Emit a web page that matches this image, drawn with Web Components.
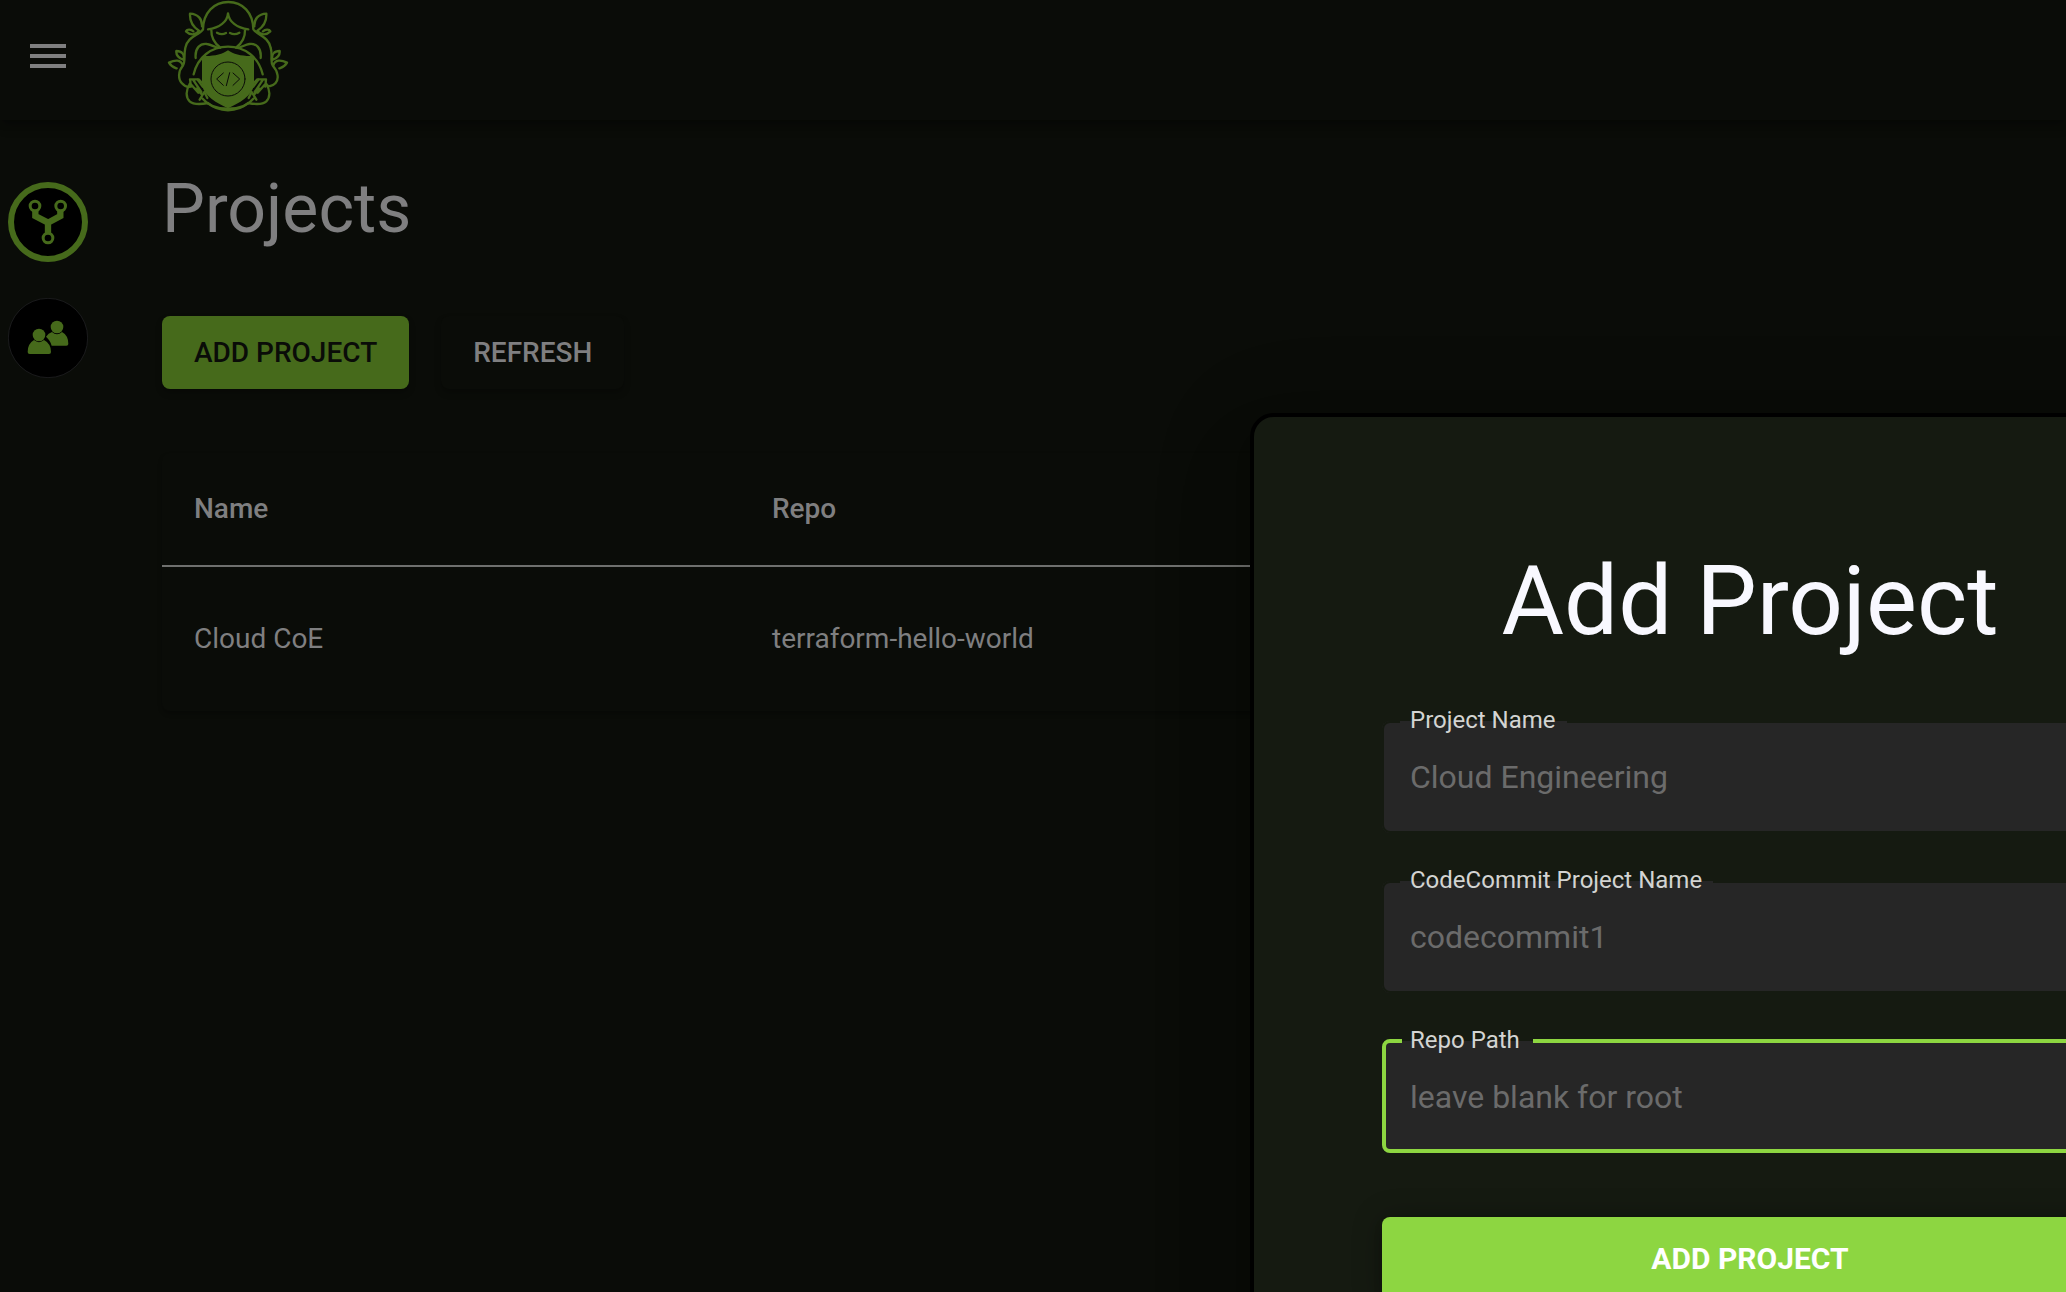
<!DOCTYPE html>
<html lang="en"><head><meta charset="utf-8"><title>Projects</title>
<style>
html,body{margin:0;height:100%;overflow:hidden;background:#0a0c08;font-family:Roboto,sans-serif}
</style></head><body>
<app-shell>
  <app-header slot="header"></app-header>
  <side-rail slot="rail"></side-rail>
  <page-title>Projects</page-title>
  <button-row><ui-button primary>ADD PROJECT</ui-button><ui-button>REFRESH</ui-button></button-row>
  <project-table></project-table>
  <add-dialog slot="dialog">
    <span slot="title">Add Project</span>
    <text-field label="Project Name" hint="Cloud Engineering"></text-field>
    <text-field label="CodeCommit Project Name" hint="codecommit1"></text-field>
    <text-field focused label="Repo Path" hint="leave blank for root"></text-field>
    <submit-button>ADD PROJECT</submit-button>
  </add-dialog>
</app-shell>
<script>
const define=(name,html)=>customElements.define(name,class extends HTMLElement{
  constructor(){super();this.attachShadow({mode:'open'});}
  connectedCallback(){this.shadowRoot.innerHTML=typeof html==='function'?html(this):html;}
});
define('app-shell',`<style>
:host{display:flex;flex-direction:column;height:1292px;width:2066px;overflow:hidden;position:relative}
.body{display:flex;flex:1}
main{flex:1;display:flex;flex-direction:column;padding:47px 0 0 66px}
</style><slot name="header"></slot><div class="body"><slot name="rail"></slot><main><slot></slot></main></div><slot name="dialog"></slot>`);
define('app-header',`<style>
:host{display:flex;height:120px;background:#0a0c08;box-shadow:0 4px 8px -2px rgba(0,0,0,.3),0 8px 10px rgba(0,0,0,.14);flex:none}
.menu{width:36px;margin:44px 0 0 30px;display:flex;flex-direction:column;gap:6px}
.menu i{height:4px;background:#7f7f80}
.logo{margin-left:84px;width:160px;height:120px}
</style><div class="menu"><i></i><i></i><i></i></div>
<svg class="logo" viewBox="0 0 480 360" fill="none" stroke="#466a1b" stroke-width="7" stroke-linecap="round" stroke-linejoin="round">
<path d="M159 88C160 38 192 6 235 6S309 38 310 88C325 108 354 108 362 143C369 170 359 184 369 198C384 214 388 238 376 250C367 260 353 260 350 254"/>
<path d="M159 88C145 108 114 108 106 143C100 170 108 184 98 198C84 214 84 238 96 250C104 259 113 262 120 260"/>
<path d="M174 88C209 84 232 65 234 40C237 65 260 84 295 88M184 90C183 118 199 134 211 143M285 90C286 118 270 134 258 143M201 98Q215 106 228 99M240 99Q254 106 268 98"/>
<path d="M137 174C134 144 151 129 171 132C187 134 198 145 210 143M332 174C335 144 318 129 298 132C283 134 271 145 258 143M131 223C143 171 184 140 234 140S326 171 338 223"/>
<path d="M147 92C124 78 119 58 120 41C144 42 157 57 156 79M147 92C140 104 122 108 108 94C112 86 124 89 130 94M322 92C345 78 350 58 349 41C325 42 312 57 313 79M322 92C329 104 347 108 361 94C357 86 345 89 339 94"/>
<path d="M98 196C93 178 75 179 57 188C64 201 75 203 80 205M101 180C85 174 78 163 79 153C96 153 104 163 101 180M370 196C375 178 393 179 411 188C404 201 393 203 388 205M367 180C383 174 390 163 389 153C372 153 364 163 367 180"/>
<path d="M119 252C108 270 106 291 119 304C132 316 158 312 174 309C205 338 263 338 294 309C310 312 336 316 349 304C362 291 360 270 349 252"/>
<path d="M123 260L120 238H146L154 247M120 250L145 278M129 239L154 276M142 238L158 260M139 266L157 285M149 299L163 276L172 294M346 260L348 238H322L314 247M348 250L323 278M339 239L314 276M326 238L310 260M329 266L311 285M319 299L305 276L296 294M158 296C190 336 278 336 310 296"/>
<path fill="#466a1b" stroke="none" d="M156 168C190 170 216 163 234 151C252 163 278 170 312 168V255C305 290 267 309 234 325C201 309 163 290 156 255Z"/>
<g stroke="#0a0c08" stroke-width="3"><circle cx="234" cy="237" r="51"/><path d="M220 219L200 237L220 256M249 219L269 237L249 256M239 218L229 257"/></g>
</svg>`);
define('side-rail',`<style>
:host{display:flex;flex-direction:column;gap:36px;width:96px;padding-top:62px;align-items:center;flex:none}
svg{display:block;width:80px;height:80px}
</style>
<svg viewBox="0 0 240 240"><circle cx="120" cy="120" r="111" fill="#000" stroke="#466a1b" stroke-width="18"/><g fill="none" stroke="#466a1b"><circle cx="81" cy="72" r="14.5" stroke-width="9"/><circle cx="158" cy="72" r="14.5" stroke-width="9"/><circle cx="120" cy="168" r="14.5" stroke-width="9"/><path stroke-width="19" d="M82 87V102L120 122L157 102V87M120 120V153"/></g></svg>
<svg viewBox="0 0 240 240"><circle cx="120" cy="120" r="119" fill="#000" stroke="#262628" stroke-width="2"/><g fill="#466a1b"><circle cx="147" cy="87" r="19"/><path d="M114 116Q121 105 132 102Q147 116 162 102Q181 112 181 138Q181 143 175 143H131Q128 129 114 116Z"/><circle cx="93" cy="111" r="19"/><path d="M78 126Q93 139 108 126Q129 137 129 162Q129 168 123 168H65Q59 168 59 162Q59 137 78 126Z"/></g></svg>`);
define('page-title',`<style>:host{display:block;font-size:68px;line-height:84px;color:#7f7f80}</style><slot></slot>`);
define('button-row',`<style>:host{display:flex;gap:32px;margin-top:65px}</style><slot></slot>`);
define('ui-button',`<style>:host{display:block;box-sizing:border-box;height:73px;padding:0 32px;border-radius:8px;font-weight:500;font-size:28px;line-height:73px;color:#7f7f80;background:#0a0c08;box-shadow:0 4px 6px rgba(0,0,0,.25)}
:host([primary]){background:#466a1b;color:#0a0c08}</style><slot></slot>`);
define('project-table',`<style>
:host{display:block;margin-top:64px;width:2600px;border-radius:8px;box-shadow:0 3px 4px rgba(0,0,0,.25);color:#7f7f80;font-size:28px}
.row{display:grid;grid-template-columns:578px 1fr;padding-left:32px}
.head{font-weight:500;height:114px;line-height:112px;border-bottom:2px solid #6f706e;box-sizing:border-box}
.data{height:144px;line-height:144px}
</style><div class="row head"><span>Name</span><span>Repo</span></div><div class="row data"><span>Cloud CoE</span><span>terraform-hello-world</span></div>`);
define('add-dialog',`<style>
:host{position:absolute;left:1250px;top:413px;width:1000px;height:1000px;box-sizing:border-box;border:4px solid #000;border-radius:24px;background:#151a11;padding:120px 128px 128px;display:flex;flex-direction:column;box-shadow:0 22px 30px -14px rgba(0,0,0,.16),0 48px 76px 6px rgba(0,0,0,.1),0 18px 92px 16px rgba(0,0,0,.1)}
h2{margin:0 0 56px;font-weight:400;font-size:96px;line-height:128px;text-align:center;color:#f8f8ff}
.form{display:flex;flex-direction:column;gap:48px}
</style><h2><slot name="title"></slot></h2><div class="form"><slot></slot></div>`);
define('text-field',el=>`<style>
:host{display:block;position:relative;height:112px;border-radius:8px;background:#262626;box-sizing:border-box}
fieldset{position:absolute;inset:-10px 0 0;margin:0;padding:0 16px;border:2px solid #151a11;border-radius:8px}
:host([focused]) fieldset{top:-11px;border:4px solid #8dd641}
legend{visibility:hidden;padding:0 13px 0 8px;height:22px;font-size:24px;line-height:22px}
.label{position:absolute;left:28px;top:-15px;font-size:24px;line-height:28px;color:#d3d4d2}
.hint{padding:0 28px;font-size:32px;line-height:112px;color:#6b6b6b}
</style><fieldset><legend>${el.getAttribute('label')}</legend></fieldset><div class="label">${el.getAttribute('label')}</div><div class="hint">${el.getAttribute('hint')}</div>`);
define('submit-button',`<style>:host{display:block;margin-top:16px;height:84px;line-height:84px;border-radius:8px;background:#8dd641;color:#fff;text-align:center;font-weight:700;font-size:30px;box-shadow:0 6px 10px -2px rgba(0,0,0,.3),0 2px 30px rgba(0,0,0,.3)}</style><slot></slot>`);
</script></body></html>
